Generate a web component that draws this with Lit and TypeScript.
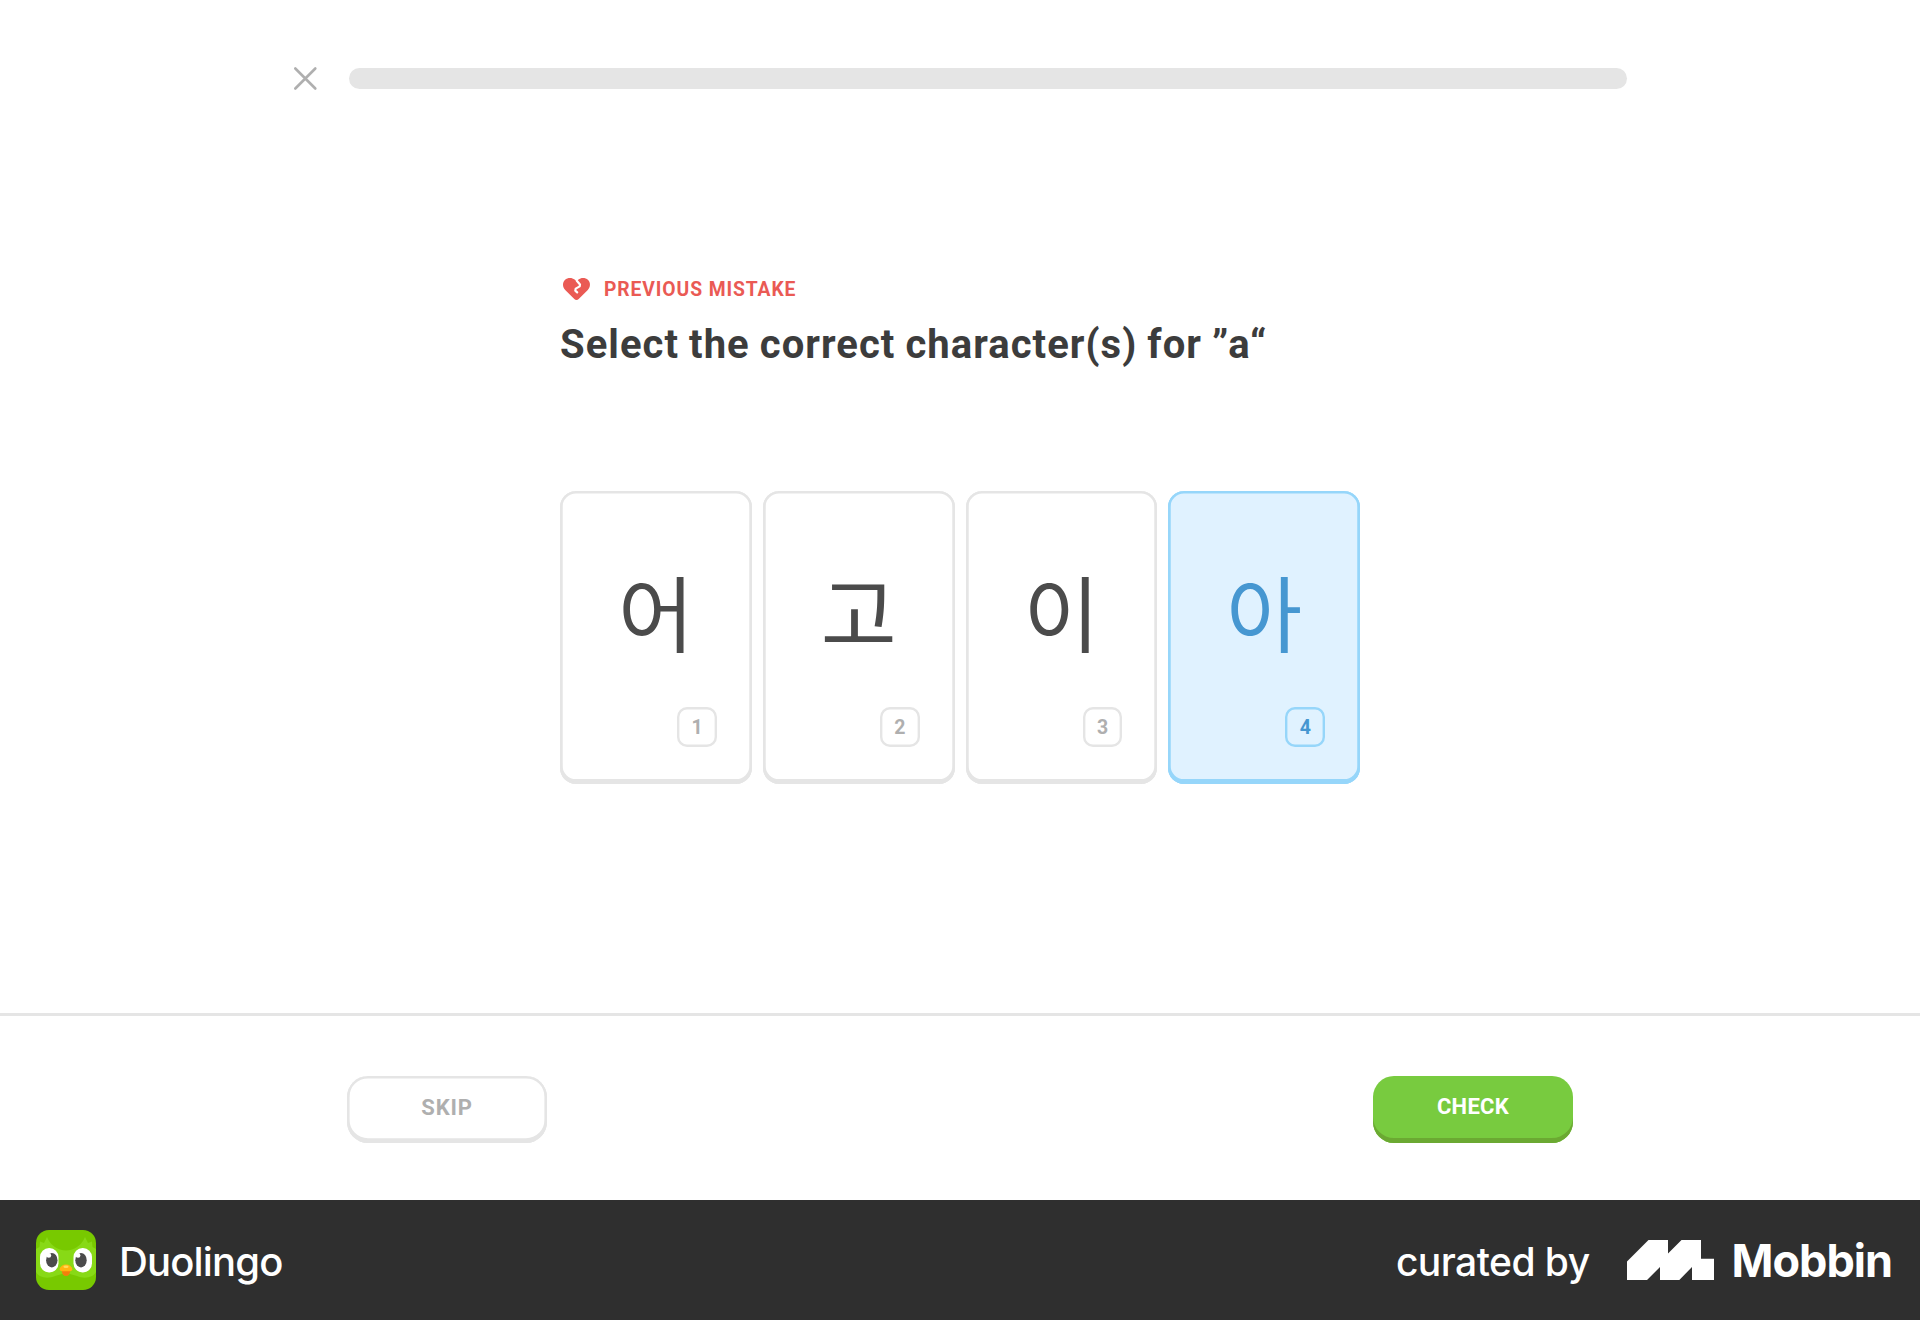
import { LitElement, html, css, svg } from "lit";
import { customElement, property } from "lit/decorators.js";
import { classMap } from "lit/directives/class-map.js";

interface Choice {
  glyph: string;
  key: number;
  selected?: boolean;
}

const CHOICES: Choice[] = [
  { glyph: "어", key: 1 },
  { glyph: "고", key: 2 },
  { glyph: "이", key: 3 },
  { glyph: "아", key: 4, selected: true },
];

@customElement("choice-card")
class ChoiceCard extends LitElement {
  @property() glyph = "";
  @property({ type: Number }) key = 0;
  @property({ type: Boolean }) selected = false;

  static styles = css`
    :host {
      display: block;
      flex: 1 1 0;
    }
    .card {
      --line: #e5e5e5;
      display: flex;
      flex-direction: column;
      align-items: center;
      box-sizing: border-box;
      height: 293px;
      padding: 60px 34.8px 0;
      border-radius: 16px;
      background: #fff;
      color: #4b4b4b;
      box-shadow: inset 0 0 0 2.5px var(--line), inset 0 -2.4px 0 2.5px var(--line);
    }
    .card.selected {
      --line: #96d6fa;
      background: #e0f2ff;
      color: #4697d1;
    }
    .glyph {
      height: 156px;
      line-height: 118px;
      font-family: "Noto Sans CJK KR", sans-serif;
      font-size: 82.5px;
    }
    .key {
      align-self: flex-end;
      display: flex;
      align-items: center;
      justify-content: center;
      box-sizing: border-box;
      width: 39.8px;
      height: 39.8px;
      padding-top: 1px;
      border-radius: 10px;
      box-shadow: inset 0 0 0 2.4px var(--line);
      color: #afafaf;
      font: 700 19.5px/1 Roboto, sans-serif;
    }
    .selected .key {
      color: #4697d1;
    }
  `;

  render() {
    return html`
      <div class=${classMap({ card: true, selected: this.selected })}>
        <div class="glyph">${this.glyph}</div>
        <div class="key">${this.key}</div>
      </div>
    `;
  }
}

const closeIcon = svg`<path d="M1.3 1.5 L21.3 21.5 M21.3 1.5 L1.3 21.5" fill="none" stroke="#afafaf" stroke-width="2.6" stroke-linecap="round"/>`;

const heartIcon = svg`
  <path fill="#ea5a54" d="M13.5 22 C12.6 22 12 21.6 11.3 20.9 L2.2 12 C-0.6 9 -0.7 4.6 1.9 2 C4.6 -0.6 9 -0.6 11.6 1.6 L13.5 3.1 L15.4 1.6 C18 -0.6 22.4 -0.6 25.1 2 C27.7 4.6 27.6 9 24.8 12 L15.7 20.9 C15 21.6 14.4 22 13.5 22 Z"/>
  <path fill="none" stroke="#fff" stroke-width="2.2" stroke-linejoin="round" stroke-linecap="round" d="M13.8 2.8 L17 6.4 L16.7 8.4 L12.7 10.6 L12.3 12.6 L14.2 14.4"/>
  <path fill="#fff" d="M12.3 1.2 L13.5 3.4 L15.4 1.2 L15 -1 L12 -1 Z"/>
`;

const owlIcon = svg`
  <rect width="60" height="60" rx="13" fill="#78c900"/>
  <path fill="#88d916" d="M0 19 L3.5 17 L4 11.5 L8 13 L11 7 C13 12 17 17 24 19.5 Q30 21.5 36 19.5 C43 17 47 12 49 7 L52 13 L56 11.5 L56.5 17 L60 19 V42 C57 48 48 49 41 46 L34 44 Q30 47 26 44 L19 46 C12 49 3 48 0 42 Z"/>
  <rect x="4" y="18" width="18.5" height="24.5" rx="9" fill="#fff"/>
  <rect x="37.5" y="18" width="18.5" height="24.5" rx="9" fill="#fff"/>
  <ellipse cx="15.8" cy="30.2" rx="5.7" ry="7.2" fill="#4b4b4b"/>
  <ellipse cx="45" cy="30.2" rx="5.7" ry="7.2" fill="#4b4b4b"/>
  <circle cx="12.8" cy="25.4" r="2.4" fill="#fff"/>
  <circle cx="42" cy="25.4" r="2.4" fill="#fff"/>
  <path fill="#f37f0c" d="M25.5 39 H34.5 L33.8 43 Q33 46 30 46 Q27 46 26.2 43 Z"/>
  <path fill="#ffb60f" d="M23.5 39.3 Q25 34.5 30 34.5 Q35 34.5 36.5 39.3 Q36 41.2 34 41.2 H26 Q24 41.2 23.5 39.3 Z"/>
  <ellipse cx="30" cy="36.8" rx="2.6" ry="1.3" fill="#ffdc59"/>
`;

const mobbinMark = svg`<path fill="#fff" d="M0 21.5 L21.5 0 H41 V13.5 L54.5 0 H74 V18.8 H87 V40 H65 V27 L52.3 40 H33 V27 L20 40 H0 Z"/>`;

@customElement("app-root")
class AppRoot extends LitElement {
  static styles = css`
    :host {
      display: flex;
      flex-direction: column;
      width: 1920px;
      height: 1320px;
      background: #fff;
      font-family: Roboto, sans-serif;
    }
    svg {
      display: block;
      flex: none;
      overflow: visible;
    }
    .top {
      display: flex;
      align-items: center;
      gap: 33px;
      width: 1333px;
      margin: 67px auto 0;
      height: 22px;
    }
    .track {
      flex: 1;
      height: 21px;
      border-radius: 11px;
      background: #e5e5e5;
    }
    .lesson {
      flex: 1;
      box-sizing: border-box;
      width: 800px;
      margin: 0 auto;
      padding-top: 188px;
    }
    .tag {
      display: flex;
      align-items: center;
      gap: 14px;
      height: 24px;
      padding-left: 3px;
      color: #ea5a54;
      font-size: 19.3px;
      font-weight: 700;
      letter-spacing: 0.9px;
      white-space: nowrap;
    }
    h1 {
      margin: 18px 0 0;
      height: 50px;
      color: #3c3c3c;
      font-size: 40px;
      line-height: 51px;
      font-weight: 700;
      letter-spacing: 1.05px;
      word-spacing: -1px;
      white-space: nowrap;
    }
    .choices {
      display: flex;
      gap: 11px;
      margin-top: 122px;
    }
    .actions {
      box-sizing: border-box;
      height: 187px;
      border-top: 3px solid #e5e5e5;
      padding: 60px 347px 0;
      display: flex;
      justify-content: space-between;
      align-items: flex-start;
    }
    .btn {
      box-sizing: border-box;
      width: 200px;
      height: 66.5px;
      border: 0;
      padding: 0 0 4px;
      border-radius: 21px;
      font: 700 22px/1 Roboto, sans-serif;
      letter-spacing: 0.8px;
    }
    .skip {
      padding-bottom: 2px;
      background: #fff;
      color: #afafaf;
      box-shadow: inset 0 0 0 2.4px #e5e5e5, inset 0 -2.4px 0 2.4px #e5e5e5;
    }
    .check {
      background: #78cb3f;
      color: #fff;
      letter-spacing: 0.3px;
      box-shadow: inset 0 -5px 0 #6ba932;
    }
    .credit {
      box-sizing: border-box;
      height: 120px;
      padding: 0 28px 0 36px;
      display: flex;
      align-items: center;
      justify-content: space-between;
      background: #2f2f2f;
      color: #fff;
      font-family: Inter, sans-serif;
      white-space: nowrap;
    }
    .app,
    .by {
      display: flex;
      align-items: center;
    }
    .app {
      gap: 23px;
      font-size: 40px;
      font-weight: 500;
      letter-spacing: -0.85px;
    }
    .app span,
    .by .lead {
      padding-top: 2px;
    }
    .by {
      font-size: 39px;
      font-weight: 500;
      letter-spacing: -0.55px;
    }
    .mark {
      margin: 0 18px 0 37px;
    }
    .brand {
      font-size: 45px;
      font-weight: 700;
      letter-spacing: -1px;
    }
  `;

  render() {
    return html`
      <header class="top">
        <svg width="22" height="22" viewBox="0 0 22 22">${closeIcon}</svg>
        <div class="track"></div>
      </header>
      <main class="lesson">
        <div class="tag">
          <svg width="27" height="22" viewBox="0 0 27 22">${heartIcon}</svg>
          <span>PREVIOUS MISTAKE</span>
        </div>
        <h1>Select the correct character(s) for ”a“</h1>
        <div class="choices">
          ${CHOICES.map(
            (c) => html`<choice-card .glyph=${c.glyph} .key=${c.key} .selected=${!!c.selected}></choice-card>`
          )}
        </div>
      </main>
      <div class="actions">
        <button class="btn skip">SKIP</button>
        <button class="btn check">CHECK</button>
      </div>
      <footer class="credit">
        <div class="app">
          <svg width="60" height="60" viewBox="0 0 60 60">${owlIcon}</svg>
          <span>Duolingo</span>
        </div>
        <div class="by">
          <span class="lead">curated by</span>
          <svg class="mark" width="87" height="40" viewBox="0 0 87 40">${mobbinMark}</svg>
          <span class="brand">Mobbin</span>
        </div>
      </footer>
    `;
  }
}
